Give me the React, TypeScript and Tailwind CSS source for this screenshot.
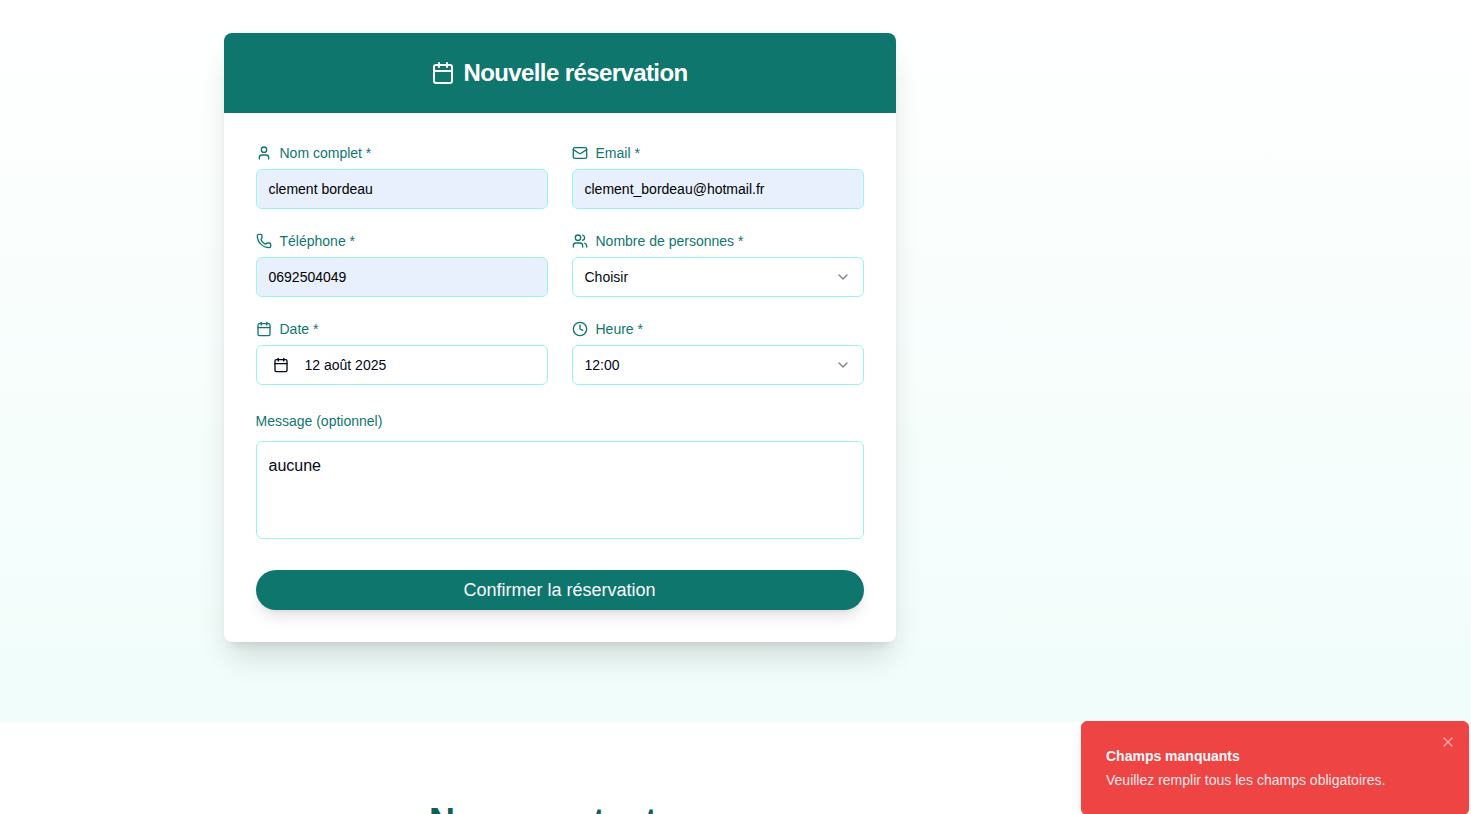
import React from 'react';
import { Calendar, User, Mail, Phone, Users, Clock, ChevronDown, X } from 'lucide-react';

const box = 'flex h-10 w-full items-center rounded-md border border-[#99f6e4] pr-3 text-sm';

function Field({ icon: Icon, label, children }: { icon: React.ElementType; label: string; children: React.ReactNode }) {
  return (
    <div>
      <div className="flex h-6 items-center gap-[7.5px] text-sm text-[#0f766e]">
        <Icon className="size-4" />
        <span>{label}</span>
      </div>
      <div className="mt-1">{children}</div>
    </div>
  );
}

export default function App() {
  return (
    <div className="relative h-[814px] overflow-hidden bg-white font-['Liberation_Sans',sans-serif]">
      <section className="h-[722px] bg-linear-to-b from-white to-[#f0fdfa] pt-[33px] pl-56">
        <div className="h-[609px] w-[672px] overflow-hidden rounded-lg bg-white text-[#020817] shadow-[0_20px_30px_-5px_rgb(0_0_0/0.13),0_8px_10px_-6px_rgb(0_0_0/0.1)]">
          <header className="flex h-20 items-center justify-center gap-2 bg-[#0f766e] pr-px text-white">
            <Calendar className="size-6" />
            <h2 className="text-2xl font-semibold tracking-tight">Nouvelle réservation</h2>
          </header>
          <form className="px-8 pt-7">
            <div className="grid grid-cols-2 gap-x-6 gap-y-5">
              <Field icon={User} label="Nom complet *">
                <div className={`${box} bg-[#e8f0fe] pl-[11.5px] text-black`}>clement bordeau</div>
              </Field>
              <Field icon={Mail} label="Email *">
                <div className={`${box} bg-[#e8f0fe] pl-[11.5px] text-black`}>clement_bordeau@hotmail.fr</div>
              </Field>
              <Field icon={Phone} label="Téléphone *">
                <div className={`${box} bg-[#e8f0fe] pl-[11.5px] text-black`}>0692504049</div>
              </Field>
              <Field icon={Users} label="Nombre de personnes *">
                <div className={`${box} justify-between bg-white pl-[11.5px]`}>
                  Choisir
                  <ChevronDown className="size-4 opacity-50" />
                </div>
              </Field>
              <Field icon={Calendar} label="Date *">
                <div className={`${box} gap-[15.5px] bg-white pl-4`}>
                  <Calendar className="size-4" />
                  12 août 2025
                </div>
              </Field>
              <Field icon={Clock} label="Heure *">
                <div className={`${box} justify-between bg-white pl-[11.5px]`}>
                  12:00
                  <ChevronDown className="size-4 opacity-50" />
                </div>
              </Field>
            </div>
            <div className="mt-[26px] -ml-[0.5px] text-sm leading-5 text-[#0f766e]">Message (optionnel)</div>
            <div className="mt-[10px] h-[98px] rounded-md border border-[#99f6e4] px-[11.5px] py-3 text-base">aucune</div>
            <button type="button" className="mt-[31px] flex h-10 w-full items-center justify-center rounded-full bg-[#0f766e] pr-px text-lg text-[#f8fafc] shadow-lg">
              Confirmer la réservation
            </button>
          </form>
        </div>
      </section>
      <section className="pt-20 pl-[429px]">
        <h2 className="text-4xl leading-10 font-bold text-[#115e59]">Nous contacter</h2>
      </section>
      <div className="absolute top-[721px] left-[1081px] h-[94px] w-[388px] rounded-md border border-[#ef4444] bg-[#ef4444] p-6 text-sm text-[#f8fafc] shadow-lg">
        <div className="leading-5 font-semibold">Champs manquants</div>
        <div className="mt-1 leading-5 opacity-90">Veuillez remplir tous les champs obligatoires.</div>
        <X className="absolute top-3 right-3 size-4 text-red-300" />
      </div>
    </div>
  );
}
